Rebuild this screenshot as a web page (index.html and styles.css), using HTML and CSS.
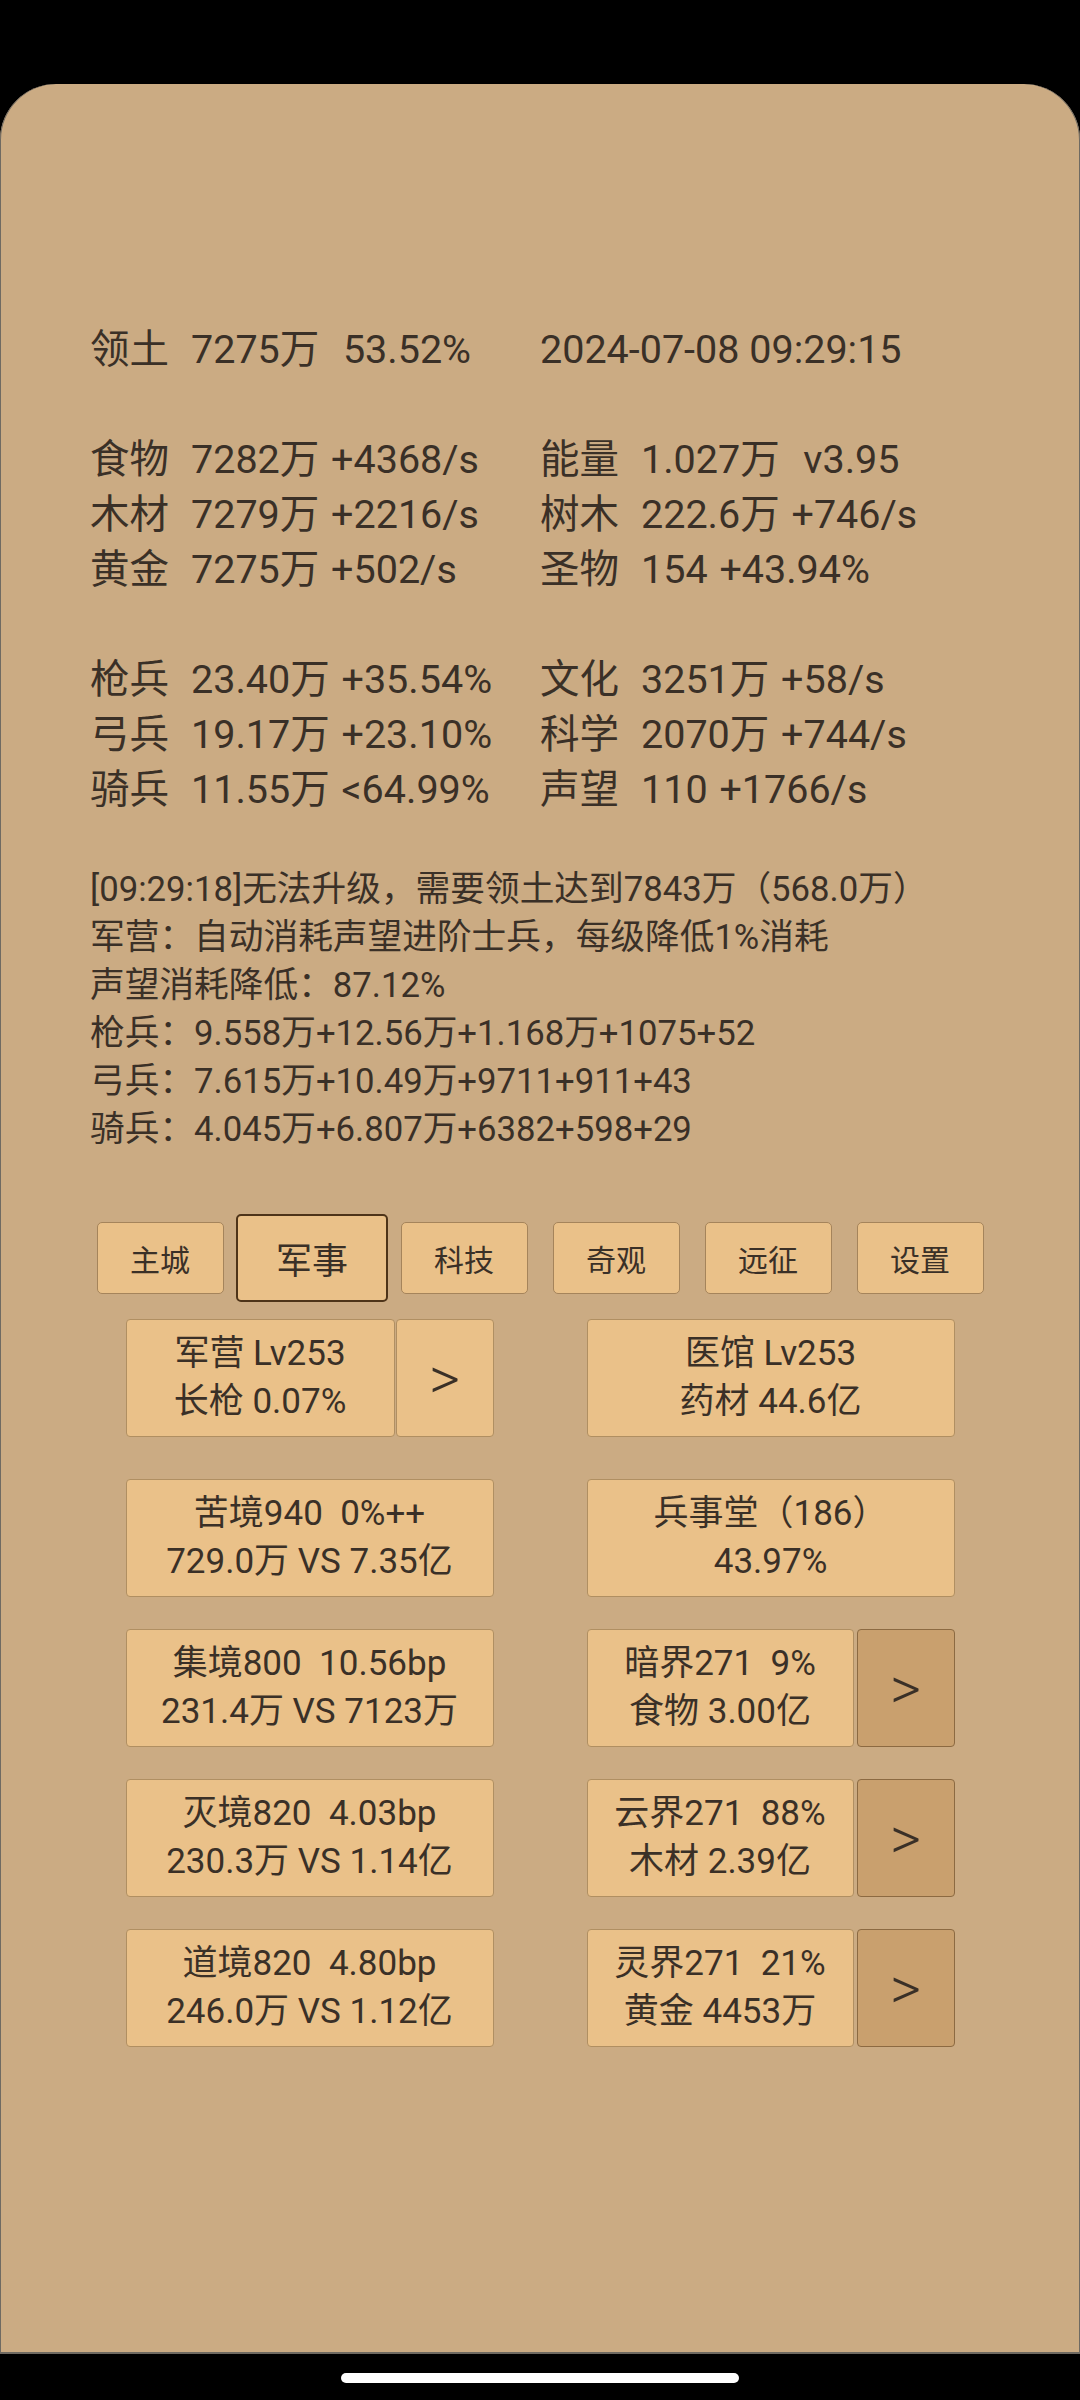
FILE: index.html
```html
<!DOCTYPE html>
<html lang="zh-CN">
<head>
<meta charset="utf-8">
<title>Game</title>
<link rel="stylesheet" href="styles.css">
</head>
<body>
<div class="screen">
  <div class="content">
    <div class="stats">
      <div class="srow">
        <div class="cell"><span class="lbl">领土</span><span class="val">7275万  53.52%</span></div>
        <div class="cell"><span class="val date">2024-07-08 09:29:15</span></div>
      </div>
      <div class="srow blank"></div>
      <div class="srow">
        <div class="cell"><span class="lbl">食物</span><span class="val">7282万 +4368/s</span></div>
        <div class="cell"><span class="lbl">能量</span><span class="val">1.027万  v3.95</span></div>
      </div>
      <div class="srow">
        <div class="cell"><span class="lbl">木材</span><span class="val">7279万 +2216/s</span></div>
        <div class="cell"><span class="lbl">树木</span><span class="val">222.6万 +746/s</span></div>
      </div>
      <div class="srow">
        <div class="cell"><span class="lbl">黄金</span><span class="val">7275万 +502/s</span></div>
        <div class="cell"><span class="lbl">圣物</span><span class="val">154 +43.94%</span></div>
      </div>
      <div class="srow blank"></div>
      <div class="srow">
        <div class="cell"><span class="lbl">枪兵</span><span class="val">23.40万 +35.54%</span></div>
        <div class="cell"><span class="lbl">文化</span><span class="val">3251万 +58/s</span></div>
      </div>
      <div class="srow">
        <div class="cell"><span class="lbl">弓兵</span><span class="val">19.17万 +23.10%</span></div>
        <div class="cell"><span class="lbl">科学</span><span class="val">2070万 +744/s</span></div>
      </div>
      <div class="srow">
        <div class="cell"><span class="lbl">骑兵</span><span class="val">11.55万 &lt;64.99%</span></div>
        <div class="cell"><span class="lbl">声望</span><span class="val">110 +1766/s</span></div>
      </div>
    </div>
    <div class="log">
      <div class="line">[09:29:18]无法升级，需要领土达到7843万（568.0万）</div>
      <div class="line">军营：自动消耗声望进阶士兵，每级降低1%消耗</div>
      <div class="line">声望消耗降低：87.12%</div>
      <div class="line">枪兵：9.558万+12.56万+1.168万+1075+52</div>
      <div class="line">弓兵：7.615万+10.49万+9711+911+43</div>
      <div class="line">骑兵：4.045万+6.807万+6382+598+29</div>
    </div>
  </div>

  <div class="tabs">
    <div class="slot"><div class="tab">主城</div></div>
    <div class="slot"><div class="tab active">军事</div></div>
    <div class="slot"><div class="tab">科技</div></div>
    <div class="slot"><div class="tab">奇观</div></div>
    <div class="slot"><div class="tab">远征</div></div>
    <div class="slot"><div class="tab">设置</div></div>
  </div>

  <div class="cards">
    <div class="cell-wrap first">
      <div class="card narrow-l">军营 Lv253
长枪 0.07%</div>
      <div class="arrow light">&gt;</div>
    </div>
    <div class="cell-wrap first">
      <div class="card full">医馆 Lv253
药材 44.6亿</div>
    </div>

    <div class="cell-wrap">
      <div class="card full">苦境940  0%++
729.0万 VS 7.35亿</div>
    </div>
    <div class="cell-wrap">
      <div class="card full">兵事堂（186）
43.97%</div>
    </div>

    <div class="cell-wrap">
      <div class="card full">集境800  10.56bp
231.4万 VS 7123万</div>
    </div>
    <div class="cell-wrap">
      <div class="card narrow-r">暗界271  9%
食物 3.00亿</div>
      <div class="arrow dark">&gt;</div>
    </div>

    <div class="cell-wrap">
      <div class="card full">灭境820  4.03bp
230.3万 VS 1.14亿</div>
    </div>
    <div class="cell-wrap">
      <div class="card narrow-r">云界271  88%
木材 2.39亿</div>
      <div class="arrow dark">&gt;</div>
    </div>

    <div class="cell-wrap">
      <div class="card full">道境820  4.80bp
246.0万 VS 1.12亿</div>
    </div>
    <div class="cell-wrap">
      <div class="card narrow-r">灵界271  21%
黄金 4453万</div>
      <div class="arrow dark">&gt;</div>
    </div>
  </div>
</div>
<div class="home"></div>
</body>
</html>
```

FILE: styles.css
```css
html, body {
  margin: 0;
  padding: 0;
}

body {
  width: 1080px;
  height: 2400px;
  overflow: hidden;
  background: #000;
  font-family: Roboto, "Noto Sans CJK SC", sans-serif;
  color: #3a3027;
}

.screen {
  box-sizing: border-box;
  margin-top: 84px;
  width: 1080px;
  height: 2270px;
  background: #cbab83;
  border-radius: 56px 56px 0 0;
  box-shadow: inset 1px 0 0 #6f6a62, inset -1px 0 0 #6f6a62, inset 0 -2px 0 #6f6a62;
  padding-top: 238px;
}

.content {
  padding-left: 90px;
}

.stats {
  font-size: 39.5px;
  line-height: 55px;
  word-spacing: 2px;
}

.srow {
  display: flex;
  height: 55px;
}

.cell {
  display: flex;
  white-space: pre;
}

.cell:first-child {
  width: 450px;
}

.lbl {
  display: inline-block;
  width: 101px;
}

.val.date {
  word-spacing: 0;
}

.log {
  margin-top: 48px;
  font-size: 34.7px;
  line-height: 48px;
}

.line {
  height: 48px;
  white-space: pre;
}

.tabs {
  display: flex;
  width: 912px;
  height: 88px;
  margin: 61px auto 0;
}

.slot {
  width: 152px;
  height: 88px;
  display: flex;
  align-items: center;
  justify-content: center;
}

.tab {
  box-sizing: border-box;
  width: 127px;
  height: 72px;
  border: 1px solid #a5845b;
  border-radius: 5px;
  background: #eac189;
  font-size: 30px;
  display: flex;
  align-items: center;
  justify-content: center;
}

.tab.active {
  width: 152px;
  height: 88px;
  border: 2px solid #4e3419;
  font-size: 36px;
}

.cards {
  display: grid;
  grid-template-columns: 368px 368px;
  column-gap: 93px;
  row-gap: 32px;
  width: 829px;
  margin: 17px auto 0;
}

.cell-wrap {
  display: flex;
  justify-content: space-between;
  height: 118px;
}

.cell-wrap.first {
  margin-bottom: 10px;
}

.card {
  box-sizing: border-box;
  height: 118px;
  border: 1px solid #b08f62;
  border-radius: 4px;
  background: #eac189;
  font-size: 35px;
  line-height: 48px;
  white-space: pre;
  text-align: center;
  display: flex;
  align-items: center;
  justify-content: center;
}

.card.full {
  width: 368px;
}

.card.narrow-l {
  width: 269px;
}

.card.narrow-r {
  width: 267px;
}

.arrow {
  box-sizing: border-box;
  width: 98px;
  height: 118px;
  border-radius: 4px;
  font-size: 60px;
  font-weight: 300;
  display: flex;
  align-items: center;
  justify-content: center;
}

.arrow.light {
  background: #eac189;
  border: 1px solid #b08f62;
}

.arrow.dark {
  background: #c9a06e;
  border: 1px solid #8c6a42;
}

.home {
  width: 398px;
  height: 10px;
  border-radius: 5px;
  background: #fff;
  margin: 19px auto 0;
}
```
